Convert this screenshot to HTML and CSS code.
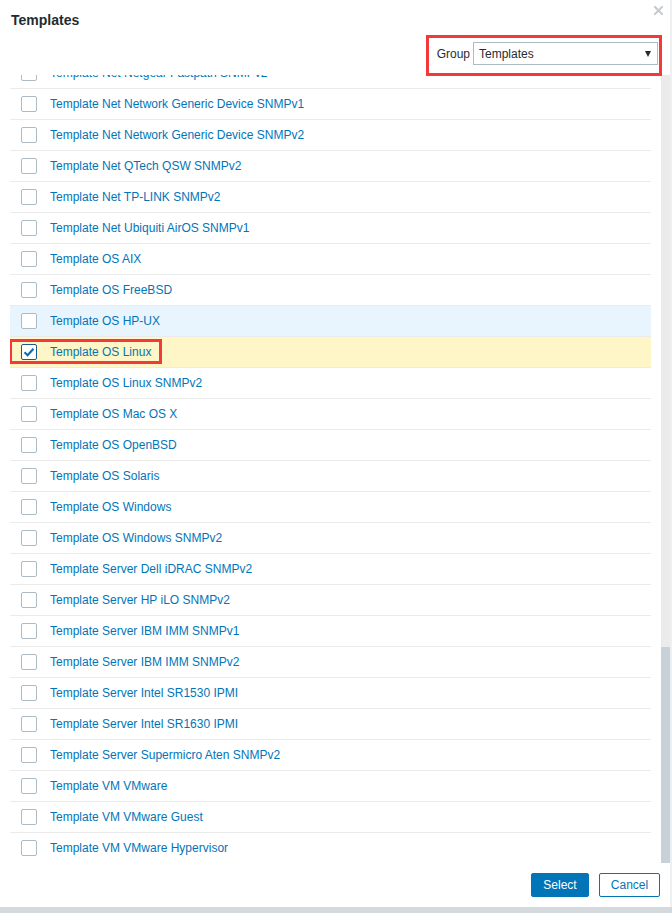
FILE: index.html
```html
<!DOCTYPE html>
<html>
<head>
<meta charset="utf-8">
<link rel="stylesheet" href="styles.css">
</head>
<body>
<div class="dialog">
  <div class="header">
    <h4 class="title">Templates</h4>
    <svg class="close" width="9" height="9" viewBox="0 0 9 9"><path d="M1 1L8 8M8 1L1 8" stroke="#c3cbd0" stroke-width="2" stroke-linecap="square"/></svg>
  </div>
  <div class="filter">
    <label class="filter-label">Group</label>
    <div class="select"><span>Templates</span><span class="arrow"></span></div>
    <span class="mark-filter"></span>
  </div>
  <div class="listwrap">
    <div class="viewport">
      <ul class="list">
        <li class="row"><span class="cb"></span><a class="link">Template Net Netgear Fastpath SNMPv2</a></li>
        <li class="row"><span class="cb"></span><a class="link">Template Net Network Generic Device SNMPv1</a></li>
        <li class="row"><span class="cb"></span><a class="link">Template Net Network Generic Device SNMPv2</a></li>
        <li class="row"><span class="cb"></span><a class="link">Template Net QTech QSW SNMPv2</a></li>
        <li class="row"><span class="cb"></span><a class="link">Template Net TP-LINK SNMPv2</a></li>
        <li class="row"><span class="cb"></span><a class="link">Template Net Ubiquiti AirOS SNMPv1</a></li>
        <li class="row"><span class="cb"></span><a class="link">Template OS AIX</a></li>
        <li class="row"><span class="cb"></span><a class="link">Template OS FreeBSD</a></li>
        <li class="row hover"><span class="cb"></span><a class="link">Template OS HP-UX</a></li>
        <li class="row selected"><span class="cb checked"><svg width="12" height="10" viewBox="0 0 12 10"><path d="M1.5 5.2L4.6 8.2L10.5 1.8" fill="none" stroke="#0b6fb0" stroke-width="2.2"/></svg></span><a class="link">Template OS Linux</a><span class="mark-row"></span></li>
        <li class="row"><span class="cb"></span><a class="link">Template OS Linux SNMPv2</a></li>
        <li class="row"><span class="cb"></span><a class="link">Template OS Mac OS X</a></li>
        <li class="row"><span class="cb"></span><a class="link">Template OS OpenBSD</a></li>
        <li class="row"><span class="cb"></span><a class="link">Template OS Solaris</a></li>
        <li class="row"><span class="cb"></span><a class="link">Template OS Windows</a></li>
        <li class="row"><span class="cb"></span><a class="link">Template OS Windows SNMPv2</a></li>
        <li class="row"><span class="cb"></span><a class="link">Template Server Dell iDRAC SNMPv2</a></li>
        <li class="row"><span class="cb"></span><a class="link">Template Server HP iLO SNMPv2</a></li>
        <li class="row"><span class="cb"></span><a class="link">Template Server IBM IMM SNMPv1</a></li>
        <li class="row"><span class="cb"></span><a class="link">Template Server IBM IMM SNMPv2</a></li>
        <li class="row"><span class="cb"></span><a class="link">Template Server Intel SR1530 IPMI</a></li>
        <li class="row"><span class="cb"></span><a class="link">Template Server Intel SR1630 IPMI</a></li>
        <li class="row"><span class="cb"></span><a class="link">Template Server Supermicro Aten SNMPv2</a></li>
        <li class="row"><span class="cb"></span><a class="link">Template VM VMware</a></li>
        <li class="row"><span class="cb"></span><a class="link">Template VM VMware Guest</a></li>
        <li class="row"><span class="cb"></span><a class="link">Template VM VMware Hypervisor</a></li>
      </ul>
    </div>
    <div class="track"><div class="thumb"></div></div>
  </div>
  <div class="footer">
    <button class="btn primary">Select</button>
    <button class="btn secondary">Cancel</button>
  </div>
</div>
</body>
</html>
```

FILE: styles.css
```css
html, body {
  margin: 0;
  padding: 0;
}
body {
  width: 672px;
  height: 913px;
  background: #d3d9dc;
  font-family: "Liberation Sans", Arial, sans-serif;
  font-size: 12px;
  color: #1f2c33;
  overflow: hidden;
}
.dialog {
  width: 670px;
  height: 907px;
  background: #ffffff;
  border-right: 2px solid #eef0f1;
  display: flex;
  flex-direction: column;
}
.header {
  height: 35px;
  display: flex;
  justify-content: space-between;
  align-items: flex-start;
  padding: 0 7px 0 11px;
}
.title {
  margin: 12px 0 0 0;
  font-size: 14px;
  line-height: 16px;
  font-weight: bold;
  color: #1f2c33;
}
.close {
  margin-top: 6px;
}
.filter {
  position: relative;
  height: 23px;
  margin-top: 7px;
  display: flex;
  justify-content: flex-end;
  align-items: center;
  gap: 3px;
  padding-right: 12px;
}
.filter-label {
  color: #1f2c33;
}
.select {
  display: flex;
  align-items: center;
  justify-content: space-between;
  padding: 0 5px 0 5px;
  box-sizing: border-box;
  width: 185px;
  height: 23px;
  border: 1px solid #acbbc4;
}
.arrow {
  width: 0;
  height: 0;
  border-left: 3.5px solid transparent;
  border-right: 3.5px solid transparent;
  border-top: 6px solid #1f2c33;
  margin-right: 1px;
}
.mark-filter {
  position: absolute;
  left: 426px;
  top: -7px;
  width: 230px;
  height: 35px;
  border: 3px solid #f33a3a;
}
.listwrap {
  margin-top: 10px;
  height: 788px;
  display: flex;
  gap: 10px;
  padding-left: 10px;
}
.viewport {
  width: 641px;
  height: 788px;
  overflow: hidden;
}
.list {
  list-style: none;
  margin: -17px 0 0 0;
  padding: 0;
}
.row {
  position: relative;
  height: 30px;
  border-bottom: 1px solid #ebebeb;
  display: flex;
  align-items: center;
  padding-left: 11px;
}
.row.hover {
  background: #e8f5ff;
}
.row.selected {
  background: #fef6c6;
}
.cb {
  width: 14px;
  height: 14px;
  border: 1px solid #acbbc4;
  border-radius: 2px;
  background: #ffffff;
  display: flex;
  align-items: center;
  justify-content: center;
  flex: none;
}
.cb.checked {
  border-color: #1b5a8c;
}
.link {
  margin-left: 13px;
  color: #0275b8;
  text-decoration: none;
  white-space: nowrap;
}
.mark-row {
  position: absolute;
  left: -1px;
  top: 2px;
  width: 147px;
  height: 19px;
  border: 3px solid #f33a3a;
}
.track {
  width: 9px;
  height: 788px;
  background: #ebebeb;
  display: flex;
  flex-direction: column;
  justify-content: flex-end;
}
.thumb {
  height: 216px;
  background: #c9d1d8;
}
.footer {
  display: flex;
  justify-content: flex-end;
  gap: 10px;
  padding: 10px 10px 0 0;
}
.btn {
  height: 24px;
  font-family: "Liberation Sans", Arial, sans-serif;
  font-size: 12px;
  border-radius: 2px;
  padding: 0 10px;
  cursor: pointer;
}
.btn.primary {
  width: 58px;
  background: #0275b8;
  border: 1px solid #0275b8;
  color: #ffffff;
}
.btn.secondary {
  width: 61px;
  background: #ffffff;
  border: 1px solid #0275b8;
  color: #0275b8;
}
```
